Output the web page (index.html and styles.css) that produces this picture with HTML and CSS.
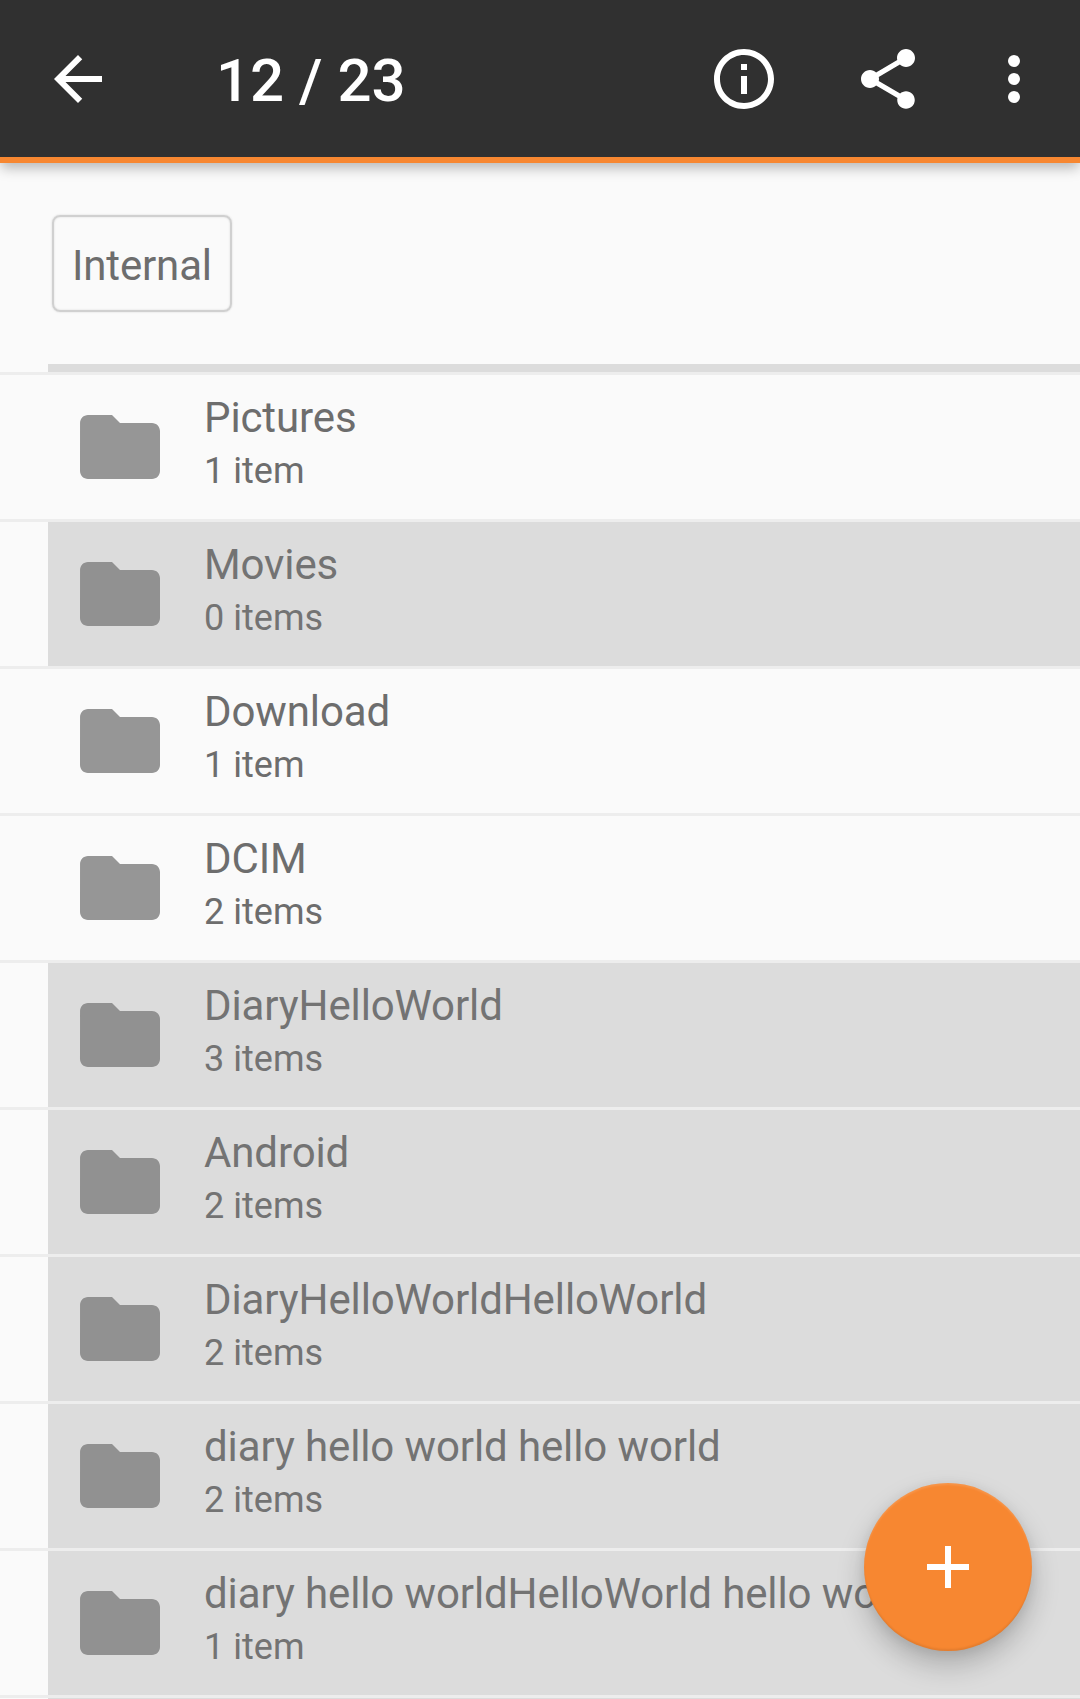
FILE: index.html
```html
<!DOCTYPE html>
<html lang="en">
<head>
<meta charset="utf-8">
<title>Files</title>
<link rel="stylesheet" href="styles.css">
</head>
<body>
<svg class="defs" width="0" height="0" aria-hidden="true">
  <symbol id="folder" viewBox="0 0 24 24"><path d="M10 4H4c-1.1 0-1.99.9-1.99 2L2 18c0 1.1.9 2 2 2h16c1.1 0 2-.9 2-2V8c0-1.1-.9-2-2-2h-8l-2-2z"/></symbol>
</svg>
<div class="screen">
  <header class="toolbar">
    <svg class="icon back" viewBox="0 0 24 24"><path d="M20 11H7.83l5.59-5.59L12 4l-8 8 8 8 1.41-1.41L7.83 13H20v-2z"/></svg>
    <h1 class="title">12 / 23</h1>
    <svg class="icon info" viewBox="0 0 24 24"><path d="M11 17h2v-6h-2v6zm1-15C6.48 2 2 6.48 2 12s4.48 10 10 10 10-4.480 10-10S17.520 2 12 2zm0 18c-4.410 0-8-3.590-8-8s3.590-8 8-8 8 3.590 8 8-3.590 8-8 8zM11 9h2V7h-2v2z"/></svg>
    <svg class="icon share" viewBox="0 0 24 24"><path d="M18 16.080c-.76 0-1.440.3-1.960.77L8.910 12.700c.05-.23.09-.46.09-.7s-.04-.47-.09-.7l7.050-4.110c.54.5 1.250.81 2.040.81 1.660 0 3-1.340 3-3s-1.340-3-3-3-3 1.340-3 3c0 .24.04.47.09.7L8.040 9.810C7.500 9.310 6.790 9 6 9c-1.660 0-3 1.340-3 3s1.340 3 3 3c.79 0 1.500-.31 2.040-.81l7.120 4.160c-.05.21-.08.43-.08.65 0 1.610 1.310 2.920 2.920 2.920 1.610 0 2.920-1.310 2.920-2.920s-1.310-2.920-2.920-2.920z"/></svg>
    <svg class="icon" viewBox="0 0 24 24"><circle cx="12" cy="6" r="2"/><circle cx="12" cy="12" r="2"/><circle cx="12" cy="18" r="2"/></svg>
  </header>
  <nav class="path"><span class="crumb">Internal</span></nav>
  <main class="list">
    <div class="row partial selected"><div class="entry"></div></div>
    <div class="row"><div class="entry"><svg class="folder"><use href="#folder"/></svg><div class="text"><div class="name">Pictures</div><div class="count">1 item</div></div></div></div>
    <div class="row selected"><div class="entry"><svg class="folder"><use href="#folder"/></svg><div class="text"><div class="name">Movies</div><div class="count">0 items</div></div></div></div>
    <div class="row"><div class="entry"><svg class="folder"><use href="#folder"/></svg><div class="text"><div class="name">Download</div><div class="count">1 item</div></div></div></div>
    <div class="row"><div class="entry"><svg class="folder"><use href="#folder"/></svg><div class="text"><div class="name">DCIM</div><div class="count">2 items</div></div></div></div>
    <div class="row selected"><div class="entry"><svg class="folder"><use href="#folder"/></svg><div class="text"><div class="name">DiaryHelloWorld</div><div class="count">3 items</div></div></div></div>
    <div class="row selected"><div class="entry"><svg class="folder"><use href="#folder"/></svg><div class="text"><div class="name">Android</div><div class="count">2 items</div></div></div></div>
    <div class="row selected"><div class="entry"><svg class="folder"><use href="#folder"/></svg><div class="text"><div class="name">DiaryHelloWorldHelloWorld</div><div class="count">2 items</div></div></div></div>
    <div class="row selected"><div class="entry"><svg class="folder"><use href="#folder"/></svg><div class="text"><div class="name">diary hello world hello world</div><div class="count">2 items</div></div></div></div>
    <div class="row selected"><div class="entry"><svg class="folder"><use href="#folder"/></svg><div class="text"><div class="name">diary hello worldHelloWorld hello wo</div><div class="count">1 item</div></div></div></div>
    <div class="row selected"><div class="entry"></div></div>
  </main>
  <button class="fab" aria-label="Add"><svg class="icon" viewBox="0 0 24 24"><path d="M19 13h-6v6h-2v-6H5v-2h6V5h2v6h6v2z"/></svg></button>
</div>
</body>
</html>
```
FILE: styles.css
```css
* { box-sizing: border-box; }

body {
  margin: 0;
  background: #fafafa;
  font-family: Roboto, sans-serif;
}

.defs { display: block; height: 0; }

.screen {
  position: relative;
  display: flex;
  flex-direction: column;
  height: 1699px;
  overflow: hidden;
}

.toolbar {
  display: flex;
  align-items: center;
  flex: none;
  height: 163px;
  padding: 0 30px 0 42px;
  background: #303030;
  border-bottom: 6px solid #f78731;
  box-shadow: 0 6px 12px -1px rgba(0, 0, 0, 0.27);
}

.icon {
  display: block;
  flex: none;
  width: 72px;
  height: 72px;
  fill: #fff;
}

.back { margin-right: 102px; }
.info { margin-right: 72px; }
.share { margin-right: 54px; }

.title {
  flex: 1;
  margin: 0;
  padding-top: 4px;
  color: #fff;
  font-size: 60px;
  font-weight: 500;
  line-height: 70px;
}

.path {
  display: flex;
  align-items: flex-start;
  flex: none;
  height: 201px;
  padding: 52px 52px;
}

.crumb {
  width: 180px;
  height: 97px;
  padding-left: 18px;
  border: 2px solid #d0d0d0;
  border-radius: 8px;
  box-shadow: 0 0 2px #d4d4d4, inset 0 0 2px #d8d8d8;
  color: #6d6d6d;
  font-size: 42px;
  letter-spacing: -0.15px;
  line-height: 98px;
}

.list { flex: none; }

.row {
  height: 147px;
  padding-left: 48px;
  border-bottom: 3px solid #ededed;
}

.row.partial { height: 11px; }

.entry {
  display: flex;
  align-items: center;
  height: 100%;
  padding-left: 24px;
  color: #6d6d6d;
  fill: #969696;
}

.selected .entry {
  background: #dcdcdc;
  color: #737373;
  fill: #919191;
}

.folder {
  flex: none;
  width: 96px;
  height: 96px;
  margin-right: 36px;
}

.text {
  padding-bottom: 6px;
  white-space: nowrap;
}

.name {
  font-size: 42px;
  letter-spacing: -0.11px;
  line-height: 54px;
}

.count {
  font-size: 36px;
  letter-spacing: 0.04px;
  line-height: 52px;
}

.fab {
  position: absolute;
  right: 48px;
  bottom: 48px;
  display: flex;
  align-items: center;
  justify-content: center;
  width: 168px;
  height: 168px;
  padding: 0;
  border: 0;
  border-radius: 50%;
  background: #f78731;
  box-shadow: 0 14px 28px rgba(0, 0, 0, 0.22), 0 2px 12px rgba(0, 0, 0, 0.07), inset 0 -2px 2px rgba(0, 0, 0, 0.08), inset 0 2px 2px rgba(255, 255, 255, 0.12);
}
```
